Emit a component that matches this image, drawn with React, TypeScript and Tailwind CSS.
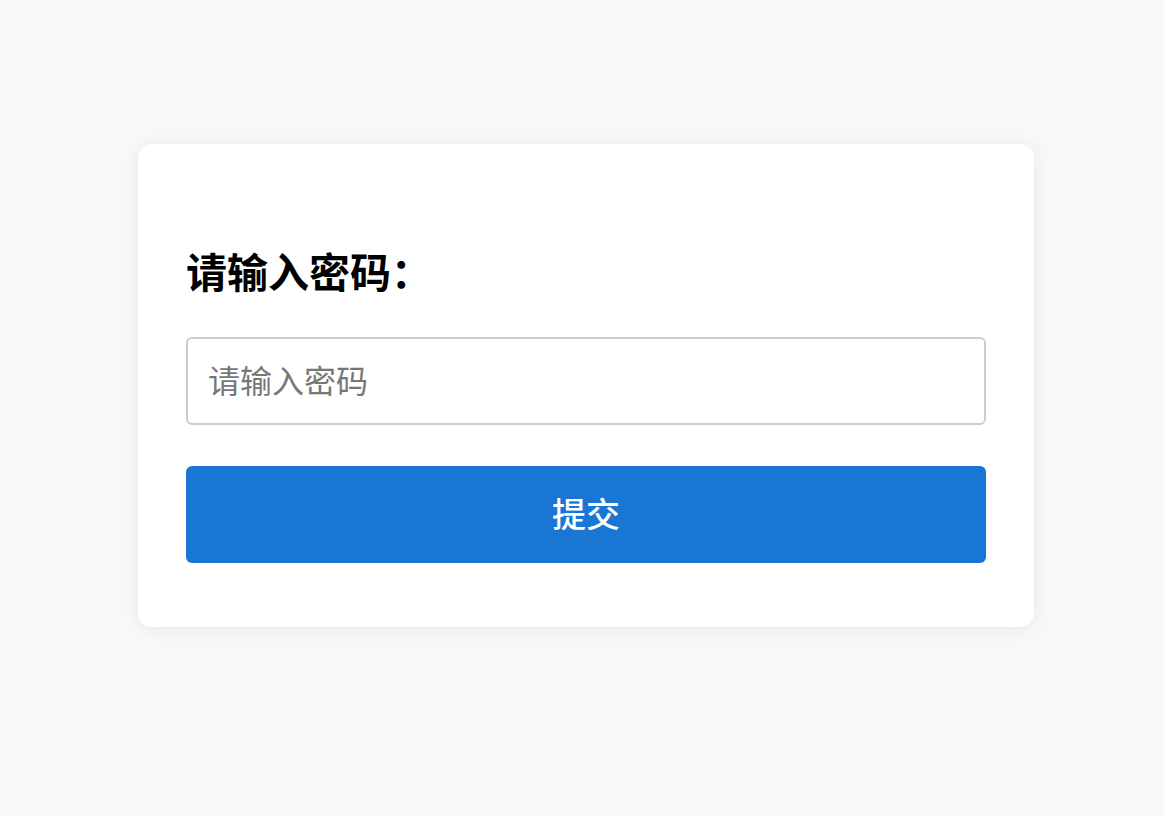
import { useState } from "react";

const font = "font-['Noto_Sans_CJK_SC','Noto_Sans',sans-serif]";

export default function App() {
  const [password, setPassword] = useState("");

  return (
    <div className={`min-h-[816px] bg-[#f8f8f8] pt-[144px] ${font}`}>
      <div className="ml-[138px] w-[896px] rounded-[14px] bg-white px-12 pb-16 pt-[100px] shadow-[0_2px_18px_rgba(0,0,0,0.07)]">
        <h2 className="mb-[41px] text-[41px] font-bold leading-[52px] text-black">请输入密码：</h2>
        <input
          type="password"
          value={password}
          onChange={(event) => setPassword(event.target.value)}
          placeholder="请输入密码"
          className="block h-[88px] w-full rounded-[6px] border-2 border-[#cccccc] bg-white px-5 pb-[5px] text-[32px] text-black outline-none placeholder:text-[#777777]"
        />
        <button
          type="button"
          className="mt-[41px] block h-[97px] w-full rounded-[6px] bg-[#1976d2] pb-[5px] text-[34px] font-medium text-white"
        >
          提交
        </button>
      </div>
    </div>
  );
}
